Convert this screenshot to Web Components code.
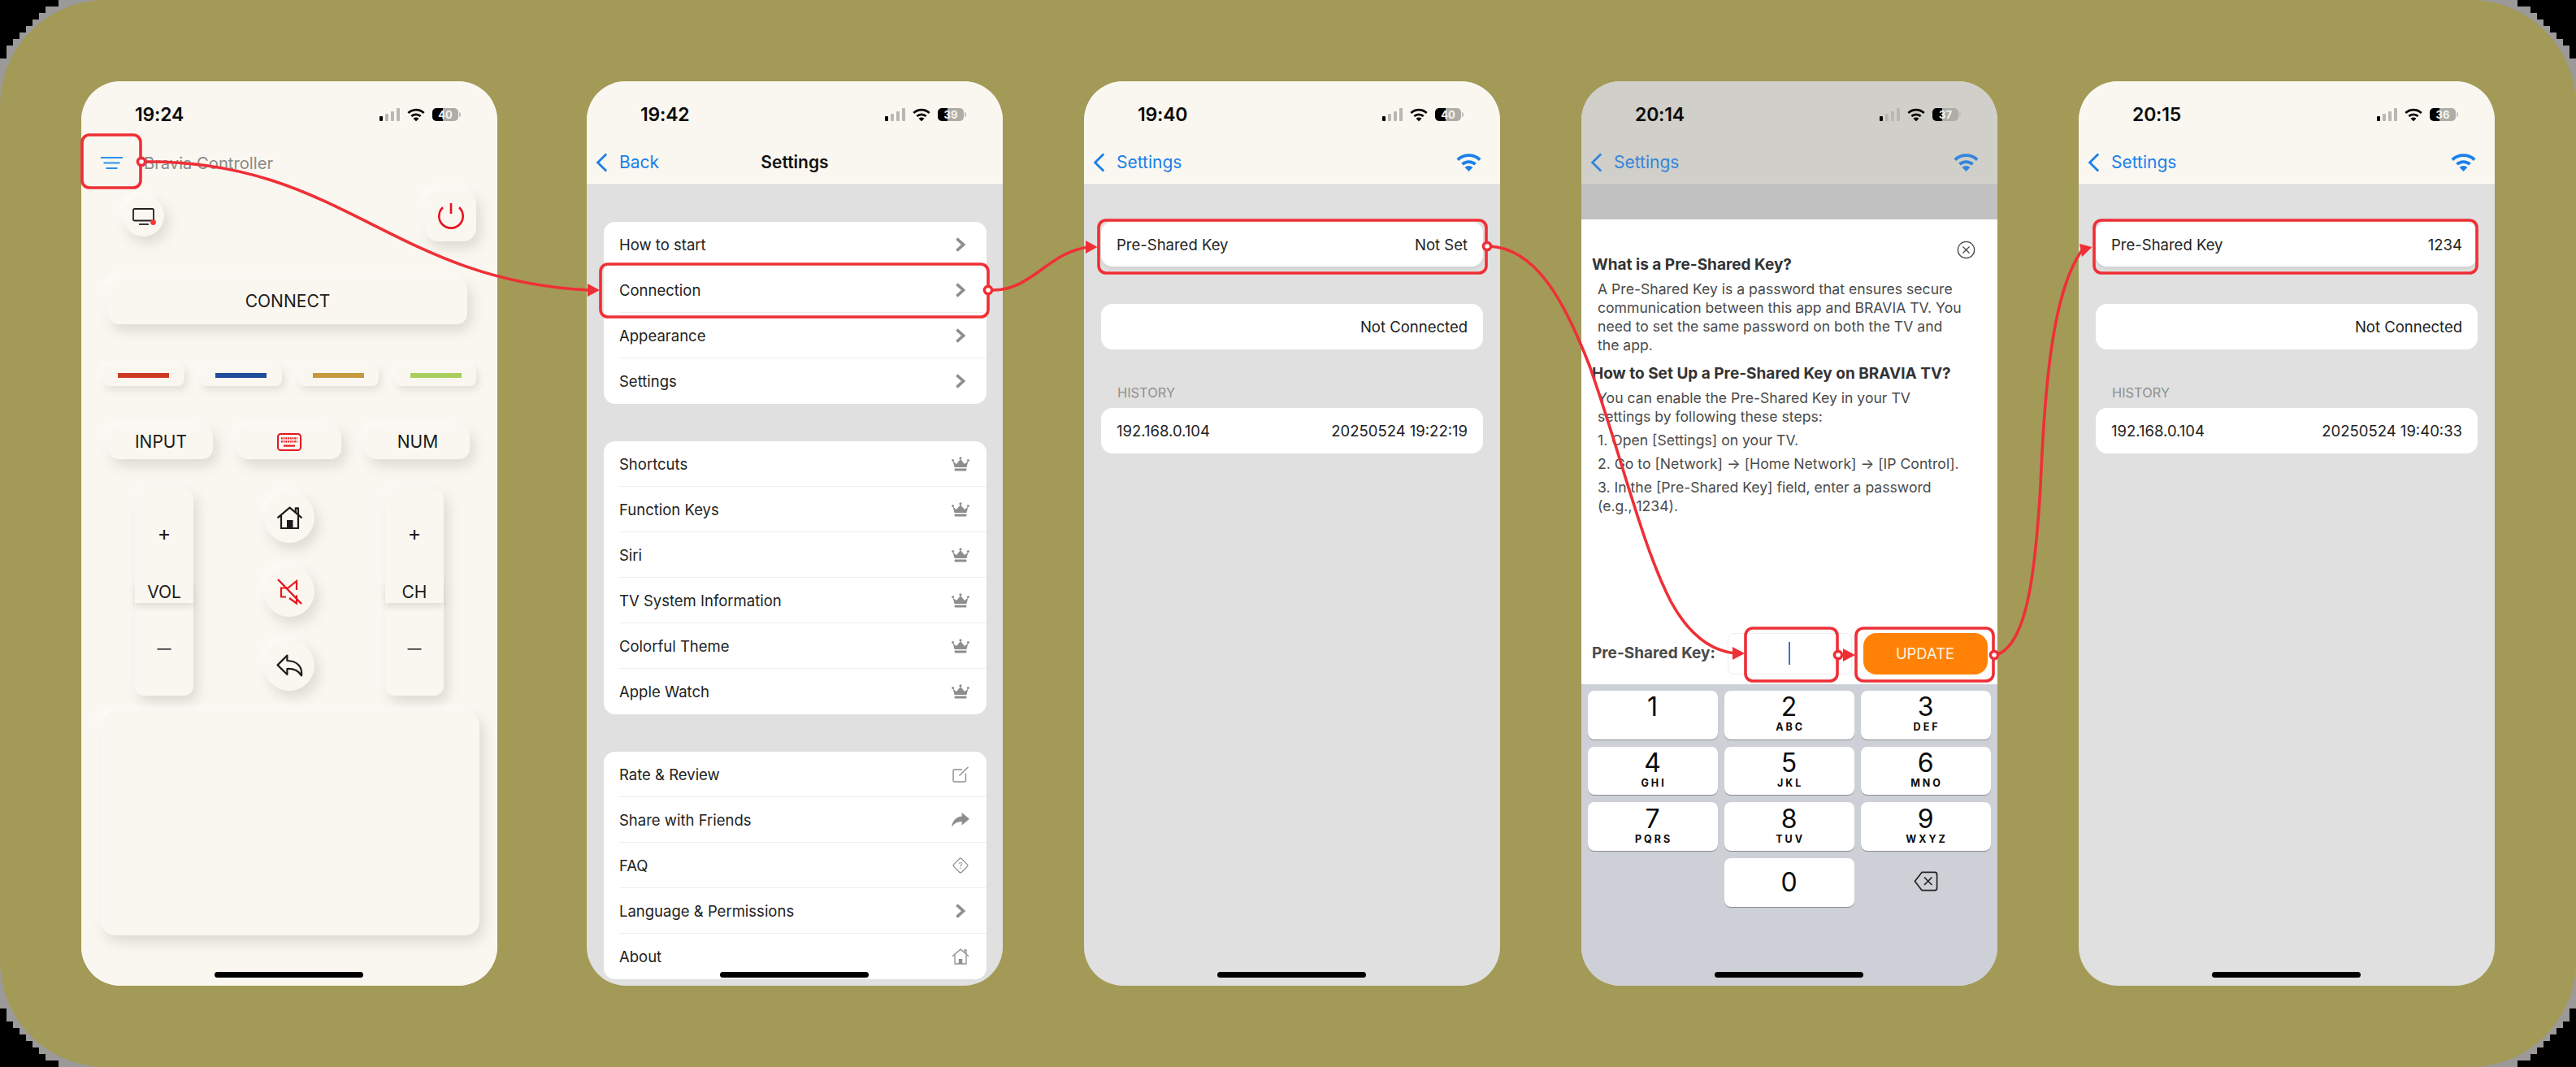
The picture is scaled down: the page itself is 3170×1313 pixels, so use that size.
<!doctype html>
<html lang="en">
<head>
<meta charset="utf-8">
<title>Bravia Controller setup</title>
<style>
  html, body { margin: 0; background: #000; }
  body { width: 3170px; height: 1313px; overflow: hidden; font-family: Inter, "Noto Sans", sans-serif; }
</style>
</head>
<body>
<app-board>
  <phone-frame time="19:24" battery="40">
    <remote-screen></remote-screen>
  </phone-frame>

  <phone-frame time="19:42" battery="39" style="margin-left:10px">
    <nav-bar back="Back" heading="Settings"></nav-bar>
    <setting-list>
      <setting-card>
        <setting-row>How to start<ui-icon slot="end" name="chevron"></ui-icon></setting-row>
        <setting-row>Connection<ui-icon slot="end" name="chevron"></ui-icon></setting-row>
        <setting-row>Appearance<ui-icon slot="end" name="chevron"></ui-icon></setting-row>
        <setting-row>Settings<ui-icon slot="end" name="chevron"></ui-icon></setting-row>
      </setting-card>
      <setting-card>
        <setting-row>Shortcuts<ui-icon slot="end" name="crown"></ui-icon></setting-row>
        <setting-row>Function Keys<ui-icon slot="end" name="crown"></ui-icon></setting-row>
        <setting-row>Siri<ui-icon slot="end" name="crown"></ui-icon></setting-row>
        <setting-row>TV System Information<ui-icon slot="end" name="crown"></ui-icon></setting-row>
        <setting-row>Colorful Theme<ui-icon slot="end" name="crown"></ui-icon></setting-row>
        <setting-row>Apple Watch<ui-icon slot="end" name="crown"></ui-icon></setting-row>
      </setting-card>
      <setting-card>
        <setting-row>Rate &amp; Review<ui-icon slot="end" name="rate"></ui-icon></setting-row>
        <setting-row>Share with Friends<ui-icon slot="end" name="share"></ui-icon></setting-row>
        <setting-row>FAQ<ui-icon slot="end" name="faq"></ui-icon></setting-row>
        <setting-row>Language &amp; Permissions<ui-icon slot="end" name="chevron"></ui-icon></setting-row>
        <setting-row>About<ui-icon slot="end" name="about"></ui-icon></setting-row>
      </setting-card>
    </setting-list>
  </phone-frame>

  <phone-frame time="19:40" battery="40">
    <nav-bar back="Settings" wifi></nav-bar>
    <connection-list psk="Not Set" address="192.168.0.104" stamp="20250524 19:22:19"></connection-list>
  </phone-frame>

  <phone-frame time="20:14" battery="37" style="--bar-bg:#d0cfc9;--accent:#3585dc;--bar-line:#b9b9b5">
    <nav-bar back="Settings" wifi></nav-bar>
    <help-sheet></help-sheet>
    <num-pad></num-pad>
  </phone-frame>

  <phone-frame time="20:15" battery="36">
    <nav-bar back="Settings" wifi></nav-bar>
    <connection-list psk="1234" address="192.168.0.104" stamp="20250524 19:40:33"></connection-list>
  </phone-frame>

  <flow-overlay></flow-overlay>
</app-board>

<script>
const ICONS = {
  chevron: `<svg viewBox="0 0 22 18"><path d="M6.4 1.6 L14.6 9 L6.4 16.4" fill="none" stroke="currentColor" stroke-width="3.6"/></svg>`,
  crown: `<svg viewBox="0 0 22 18" fill="currentColor"><path d="M1.6 5.4 L6 9 L11 3 L16 9 L20.4 5.4 L18.4 13 H3.6 Z"/><circle cx="1.6" cy="4.6" r="1.5"/><circle cx="11" cy="1.8" r="1.6"/><circle cx="20.4" cy="4.6" r="1.5"/><rect x="3.6" y="14.4" width="14.8" height="3" rx="1"/></svg>`,
  rate: `<svg viewBox="0 0 22 20" fill="none" stroke="currentColor" stroke-width="1.4"><path d="M17.5 8.5 V17.6 a1.4 1.4 0 0 1 -1.4 1.4 H3.4 a1.4 1.4 0 0 1 -1.4 -1.4 V5.4 a1.4 1.4 0 0 1 1.4 -1.4 H13"/><path d="M9.5 11.5 L20.5 .8"/></svg>`,
  share: `<svg viewBox="0 0 22 18" fill="currentColor"><path d="M12.6 0 L22 7.8 L12.6 15.6 V11 C7.4 11 3.4 13 .2 17.8 C.8 11 5 5.2 12.6 4.6 Z"/></svg>`,
  faq: `<svg viewBox="0 0 22 22"><rect x="4.2" y="4.2" width="13.6" height="13.6" rx="1.6" transform="rotate(45 11 11)" fill="none" stroke="currentColor" stroke-width="1.2"/><text x="11" y="14.6" text-anchor="middle" font-size="10" font-family="Inter, sans-serif" fill="currentColor">?</text></svg>`,
  about: `<svg viewBox="0 0 22 20" fill="none" stroke="currentColor" stroke-width="1.3"><path d="M1 9.8 L11 1.2 L21 9.8"/><path d="M4 8 V19 H18 V8"/><path d="M16 4.6 V1.8 H18 V6.4"/><rect x="8.8" y="13" width="4.4" height="6" fill="currentColor" stroke="none"/></svg>`,
  menu: `<svg viewBox="0 0 27 15" fill="currentColor"><rect width="27" height="2"/><rect x="3.5" y="6.5" width="20" height="2"/><rect x="6.5" y="13" width="14" height="2"/></svg>`,
  tv: `<svg viewBox="0 0 30 22" fill="none" stroke="currentColor" stroke-width="1.8"><rect x="1" y="1" width="25" height="14.5" rx="1.6"/><path d="M8 20 H20"/><circle cx="25.5" cy="17.5" r="3.4" fill="#f23a36" stroke="none"/></svg>`,
  power: `<svg viewBox="0 0 32 32" fill="none" stroke="currentColor" stroke-width="2.6"><path d="M6 5.2 A14.7 14.7 0 1 0 26 5.2"/><path d="M16 0 V13"/></svg>`,
  keyboard: `<svg viewBox="0 0 30 22" fill="none" stroke="currentColor"><rect x="1" y="1" width="28" height="20" rx="3.6" stroke-width="2"/><path d="M5 6.4 H25 M5 10.4 H25" stroke-width="2.2" stroke-dasharray="1.8 .9"/><path d="M8 15.6 H22" stroke-width="2.2"/></svg>`,
  home: `<svg viewBox="0 0 33 28" fill="none" stroke="currentColor" stroke-width="2.2" stroke-linejoin="round"><path d="M1.5 14.4 L16.5 1.6 L31.5 14.4"/><path d="M6 11 V27 H27 V11"/><path d="M23.8 7 V2.4 H27 V10"/><rect x="13" y="17" width="7.5" height="10" fill="currentColor" stroke="none"/></svg>`,
  mute: `<svg viewBox="0 0 31 32" fill="none" stroke="currentColor" stroke-width="2.2"><path d="M24 14 V3 L13.5 11.5 H5 V22.5 H11"/><path d="M15 24 L24 30.5 V20.5"/><path d="M1 1 L30 31" stroke-width="2.4"/></svg>`,
  back: `<svg viewBox="0 0 33 28" fill="none" stroke="currentColor" stroke-width="2.2" stroke-linejoin="round"><path d="M13.4 1.6 L1.6 13.4 L13.4 25 V18 C21 17.6 27.4 20.4 31 26.4 C32.4 15.4 25.6 8.4 13.4 8 Z"/></svg>`,
  backChevron: `<svg viewBox="0 0 15 24" fill="none" stroke="currentColor" stroke-width="2.8"><path d="M13.2 1.4 L2.6 12 L13.2 22.6"/></svg>`,
  wifi: `<svg viewBox="0 0 24 18" fill="none" stroke="currentColor" stroke-width="2.9"><path d="M1.4 6.6 A15.4 15.4 0 0 1 22.6 6.6"/><path d="M5.8 11 A9 9 0 0 1 18.2 11"/><path d="M12 17.8 L8.2 14 A5.4 5.4 0 0 1 15.8 14 Z" fill="currentColor" stroke="none"/></svg>`,
  backspace: `<svg viewBox="0 0 30 25" fill="none" stroke="currentColor" stroke-width="1.7" stroke-linejoin="round"><path d="M10 1.4 H26 a2.6 2.6 0 0 1 2.6 2.6 V21 a2.6 2.6 0 0 1 -2.6 2.6 H10 L1.4 12.5 Z"/><path d="M13 7.5 L22.4 17 M22.4 7.5 L13 17"/></svg>`,
  close: `<svg viewBox="0 0 24 24" fill="none" stroke="currentColor" stroke-width="1.3"><circle cx="12" cy="12" r="10.6"/><path d="M7.8 7.8 L16.2 16.2 M16.2 7.8 L7.8 16.2"/></svg>`
};

class UiIcon extends HTMLElement {
  constructor() {
    super();
    this.attachShadow({ mode: "open" });
  }

  connectedCallback() {
    const name = this.getAttribute("name");
    this.shadowRoot.innerHTML = `
      <style>
        :host { display: inline-flex; width: 22px; color: #8e8e8e; flex: none; }
        svg { display: block; width: 100%; height: auto; }
      </style>
      ${ICONS[name]}`;
  }
}
customElements.define("ui-icon", UiIcon);

class AppBoard extends HTMLElement {
  constructor() {
    super();
    this.attachShadow({ mode: "open" });
  }

  // stair-stepped black corners, the screenshot has them around the rounded card
  corners() {
    const r = 130, cell = 8;
    let d = "";
    for (let j = 0; j * cell < r; j++) {
      let run = 0;
      while ((run + 1) * cell <= r && Math.hypot(r - (run + 1) * cell, r - (j + 1) * cell) > r + 2) run++;
      if (run) d += `M0 ${j * cell}h${run * cell}v${cell}h-${run * cell}z`;
    }
    return d;
  }

  connectedCallback() {
    const d = this.corners();
    this.shadowRoot.innerHTML = `
      <style>
        :host { display: block; position: relative; width: 3170px; height: 1313px; background: #9c9a98; overflow: hidden; }
        svg { position: absolute; inset: 0; }
        .card {
          position: relative; box-sizing: border-box; width: 100%; height: 100%;
          padding: 100px 100px; display: flex; gap: 100px; align-items: flex-start;
          background: #a39a57; border-radius: 130px;
        }
      </style>
      <svg width="3170" height="1313">
        <path d="${d}"/>
        <path d="${d}" transform="translate(3170 0) scale(-1 1)"/>
        <path d="${d}" transform="translate(0 1313) scale(1 -1)"/>
        <path d="${d}" transform="translate(3170 1313) scale(-1 -1)"/>
      </svg>
      <div class="card"><slot></slot></div>`;
  }
}
customElements.define("app-board", AppBoard);

class StatusBar extends HTMLElement {
  constructor() {
    super();
    this.attachShadow({ mode: "open" });
  }

  connectedCallback() {
    const level = this.getAttribute("battery");
    this.shadowRoot.innerHTML = `
      <style>
        :host { display: flex; align-items: center; box-sizing: border-box; height: 82px; padding: 0 45px 0 66px; background: var(--bar-bg, #f9f7f0); }
        .time { font: 600 23px/28px Inter, sans-serif; color: #0a0a0a; letter-spacing: -.2px; }
        .tray { margin-left: auto; display: flex; align-items: center; }
        .signal { display: flex; align-items: flex-end; gap: 3px; height: 16px; width: 25px; margin-right: 9px; }
        .signal i { width: 4px; border-radius: 1px; background: #b8b7b1; }
        .signal i:first-child { height: 6px; background: #000; }
        .signal i:nth-child(2) { height: 9px; }
        .signal i:nth-child(3) { height: 12px; }
        .signal i:nth-child(4) { height: 16px; }
        ui-icon { width: 22px; color: #000; margin-right: 9px; }
        .battery {
          position: relative; width: 32px; height: 16px; border-radius: 5px; margin-right: 3px;
          display: flex; align-items: center; justify-content: center;
          font: 700 13px/16px Inter, sans-serif; color: #f4f4f0;
          background: linear-gradient(90deg, #000 ${level}%, #aeada7 ${level}%);
        }
        .battery::after { content: ""; position: absolute; right: -3px; top: 5px; width: 2px; height: 6px; border-radius: 0 2px 2px 0; background: #c0bfba; }
      </style>
      <span class="time">${this.getAttribute("time")}</span>
      <div class="tray">
        <div class="signal"><i></i><i></i><i></i><i></i></div>
        <ui-icon name="wifi"></ui-icon>
        <div class="battery">${level}</div>
      </div>`;
  }
}
customElements.define("status-bar", StatusBar);

class PhoneFrame extends HTMLElement {
  constructor() {
    super();
    this.attachShadow({ mode: "open" });
  }

  connectedCallback() {
    this.shadowRoot.innerHTML = `
      <style>
        :host {
          position: relative; display: flex; flex-direction: column; flex: none;
          width: 512px; height: 1113px; overflow: hidden;
          border-radius: 48px; background: #dfe0df;
        }
        .home { position: absolute; left: 164px; bottom: 10px; width: 183px; height: 7px; border-radius: 4px; background: #000; }
      </style>
      <status-bar time="${this.getAttribute("time")}" battery="${this.getAttribute("battery")}"></status-bar>
      <slot></slot>
      <div class="home"></div>`;
  }
}
customElements.define("phone-frame", PhoneFrame);

class NavBar extends HTMLElement {
  constructor() {
    super();
    this.attachShadow({ mode: "open" });
  }

  connectedCallback() {
    const heading = this.getAttribute("heading");
    const wifi = this.hasAttribute("wifi");
    this.shadowRoot.innerHTML = `
      <style>
        :host {
          position: relative; display: flex; align-items: center; flex: none; box-sizing: border-box;
          height: 46px; padding: 0 23px 10px 11px; background: var(--bar-bg, #f9f7f0);
          border-bottom: 1px solid var(--bar-line, #d4d4d0); color: var(--accent, #1b80ea);
          font: 400 21px/26px Inter, sans-serif;
        }
        .chev { width: 15px; color: inherit; margin-right: 14px; }
        .wifi { width: 31px; color: inherit; margin-left: auto; }
        b { position: absolute; left: 0; right: 0; top: 5px; text-align: center; font-weight: 600; color: #111; }
      </style>
      <ui-icon class="chev" name="backChevron"></ui-icon>
      <span>${this.getAttribute("back")}</span>
      ${heading ? `<b>${heading}</b>` : ""}
      ${wifi ? `<ui-icon class="wifi" name="wifi"></ui-icon>` : ""}`;
  }
}
customElements.define("nav-bar", NavBar);

class SettingList extends HTMLElement {
  constructor() {
    super();
    this.attachShadow({ mode: "open" });
  }

  connectedCallback() {
    this.shadowRoot.innerHTML = `
      <style>
        :host { display: flex; flex-direction: column; gap: 46px; padding: 45px 20.5px 0; flex: 1; }
      </style>
      <slot></slot>`;
  }
}
customElements.define("setting-list", SettingList);

class SettingCard extends HTMLElement {
  constructor() {
    super();
    this.attachShadow({ mode: "open" });
  }

  connectedCallback() {
    this.shadowRoot.innerHTML = `
      <style>
        :host { display: block; background: #fff; border-radius: 14px; overflow: hidden; }
      </style>
      <slot></slot>`;
  }
}
customElements.define("setting-card", SettingCard);

class SettingRow extends HTMLElement {
  constructor() {
    super();
    this.attachShadow({ mode: "open" });
  }

  connectedCallback() {
    this.shadowRoot.innerHTML = `
      <style>
        :host { display: block; padding-left: var(--row-start, 19.5px); font: 400 18.5px/24px Inter, sans-serif; color: #222; }
        .line {
          display: flex; align-items: center; justify-content: space-between; box-sizing: border-box;
          height: var(--row-height, 56px); padding-right: var(--row-end, 21px); border-bottom: 1px solid #eeeeee;
        }
        :host(:last-child) .line { border-bottom: 0; }
      </style>
      <div class="line"><span><slot></slot></span><slot name="end"></slot></div>`;
  }
}
customElements.define("setting-row", SettingRow);

class ConnectionList extends HTMLElement {
  constructor() {
    super();
    this.attachShadow({ mode: "open" });
  }

  connectedCallback() {
    this.shadowRoot.innerHTML = `
      <style>
        :host { display: block; padding: 45px 21px 0; --row-end: 19px; --row-start: 19px; }
        .key { margin-bottom: 46px; --row-height: 55px; box-shadow: 0 4px 3px rgba(0,0,0,.05); }
        h2 { margin: 43px 0 8.5px 20px; font: 400 16.4px/20px Inter, sans-serif; color: #8f8f8f; }
      </style>
      <setting-card class="key"><setting-row>Pre-Shared Key<span slot="end">${this.getAttribute("psk")}</span></setting-row></setting-card>
      <setting-card><setting-row><span></span><span slot="end">Not Connected</span></setting-row></setting-card>
      <h2>HISTORY</h2>
      <setting-card><setting-row>${this.getAttribute("address")}<span slot="end">${this.getAttribute("stamp")}</span></setting-row></setting-card>`;
  }
}
customElements.define("connection-list", ConnectionList);

class SoftKey extends HTMLElement {
  constructor() {
    super();
    this.attachShadow({ mode: "open" });
  }

  connectedCallback() {
    this.shadowRoot.innerHTML = `
      <style>
        :host {
          display: flex; align-items: center; justify-content: center; box-sizing: border-box; flex: none;
          background: #f9f7f0; border-radius: 13px; color: #1c1c1c;
          font: 400 21px/26px Inter, sans-serif;
          box-shadow: 5px 8px 16px rgba(110,105,90,.2), -4px -4px 10px rgba(255,255,255,.75);
        }
        :host([round]) { border-radius: 50%; }
      </style>
      <slot></slot>`;
  }
}
customElements.define("soft-key", SoftKey);

class RockerKey extends HTMLElement {
  constructor() {
    super();
    this.attachShadow({ mode: "open" });
  }

  connectedCallback() {
    this.shadowRoot.innerHTML = `
      <style>
        :host {
          display: flex; flex-direction: column; flex: none; width: 72px; height: 254px;
          background: #f9f7f0; border-radius: 12px; color: #1c1c1c;
          font: 400 21px/26px Inter, sans-serif; text-align: center;
          box-shadow: 5px 8px 16px rgba(110,105,90,.2), -4px -2px 10px rgba(255,255,255,.6);
        }
        .step { height: 112px; display: flex; align-items: center; justify-content: center; font-size: 25px; padding-bottom: 4px; box-sizing: border-box; }
        .step.down { height: 113.5px; font-size: 17px; padding-bottom: 1px; }
        .label { height: 28.5px; line-height: 30px; background: #f9f7f0; box-shadow: 0 5px 7px rgba(110,105,90,.16); position: relative; }
      </style>
      <div class="step">+</div>
      <div class="label">${this.getAttribute("label")}</div>
      <div class="step down">—</div>`;
  }
}
customElements.define("rocker-key", RockerKey);

class RemoteScreen extends HTMLElement {
  constructor() {
    super();
    this.attachShadow({ mode: "open" });
  }

  connectedCallback() {
    const colors = ["#cc3b24", "#1f4d9e", "#c6993e", "#a8cf5b"];
    this.shadowRoot.innerHTML = `
      <style>
        :host { display: flex; flex-direction: column; flex: 1; background: #f9f7f0; }
        .top { display: flex; align-items: center; height: 45px; padding: 0 0 8px 24px; box-sizing: border-box; font: 400 20.2px/26px Inter, sans-serif; color: #8a8a88; }
        .top ui-icon { width: 27px; color: #2b8ff0; margin-right: 26px; }
        .power-row { display: flex; align-items: center; justify-content: space-between; margin: 7px 26px 0 51px; }
        .connect { margin: 46px 37px 0 33px; height: 56px; }
        .colors { display: flex; gap: 20px; margin: 50px 26px 0 27px; }
        .colors soft-key { flex: 1; height: 25.5px; border-radius: 8px; box-shadow: 3px 5px 10px rgba(110,105,90,.16), -3px -2px 6px rgba(255,255,255,.7); }
        .colors i { display: block; width: 63px; height: 6px; }
        .inputs { display: flex; gap: 30px; margin: 49px 34px 0; }
        .inputs soft-key { flex: 1; height: 41px; }
        .controls { display: flex; justify-content: space-between; margin: 37px 66px 0; height: 254px; }
        .middle { display: flex; flex-direction: column; align-items: center; gap: 29px; padding-top: 4px; }
        .middle ui-icon { color: #1c1c1c; width: 33px; }
        .pad { margin: 19px 22px 0 24px; height: 276px; border-radius: 18px; }
      </style>
      <div class="top"><ui-icon name="menu"></ui-icon>Bravia Controller</div>
      <div class="power-row">
        <soft-key round style="width:51px;height:51px"><ui-icon name="tv" style="width:30px;color:#222;margin:2px 0 0 2px"></ui-icon></soft-key>
        <soft-key style="width:63px;height:63px;border-radius:16px"><ui-icon name="power" style="width:32px;color:#e8141c"></ui-icon></soft-key>
      </div>
      <soft-key class="connect">CONNECT</soft-key>
      <div class="colors">${colors.map(c => `<soft-key><i style="background:${c}"></i></soft-key>`).join("")}</div>
      <div class="inputs">
        <soft-key>INPUT</soft-key>
        <soft-key><ui-icon name="keyboard" style="width:30px;color:#e8141c"></ui-icon></soft-key>
        <soft-key>NUM</soft-key>
      </div>
      <div class="controls">
        <rocker-key label="VOL"></rocker-key>
        <div class="middle">
          <soft-key round style="width:62px;height:62px"><ui-icon name="home"></ui-icon></soft-key>
          <soft-key round style="width:62px;height:62px"><ui-icon name="mute" style="color:#e8141c;width:31px"></ui-icon></soft-key>
          <soft-key round style="width:62px;height:62px"><ui-icon name="back"></ui-icon></soft-key>
        </div>
        <rocker-key label="CH"></rocker-key>
      </div>
      <soft-key class="pad"></soft-key>`;
  }
}
customElements.define("remote-screen", RemoteScreen);

class HelpSheet extends HTMLElement {
  constructor() {
    super();
    this.attachShadow({ mode: "open" });
  }

  connectedCallback() {
    this.shadowRoot.innerHTML = `
      <style>
        :host { display: block; flex: none; background: #c1c1c1; padding-top: 41.5px; }
        .sheet {
          position: relative; box-sizing: border-box; height: 572.5px; padding: 44px 12.5px 12.5px 13px;
          display: flex; flex-direction: column; background: #fff;
          font: 400 17.6px/23px Inter, sans-serif; color: #4a4a4a;
        }
        h3 { margin: 0; font: 700 19px/23px Inter, sans-serif; color: #333; }
        h3 + p { margin-top: 7px; }
        p { margin: 6px 0 0 7px; }
        p + h3 { margin-top: 12px; }
        .close { position: absolute; top: 26px; right: 27px; width: 23px; color: #444; }
        .entry { margin-top: auto; display: flex; align-items: center; }
        label { flex: 1; font: 700 19px/24px Inter, sans-serif; color: #4a4a4a; }
        .field { width: 153px; height: 51px; border: 1px solid #eeeeee; border-radius: 8px; box-sizing: border-box; display: flex; align-items: center; justify-content: center; }
        .field i { display: block; width: 2px; height: 28px; background: #3e70cf; }
        button {
          all: unset; box-sizing: border-box; margin-left: 14px; width: 153px; height: 51px; border-radius: 16px;
          background: #ff8206; color: #f9f3e0; text-align: center; font: 400 18.4px/51px Inter, sans-serif;
        }
      </style>
      <div class="sheet">
        <ui-icon class="close" name="close"></ui-icon>
        <h3>What is a Pre-Shared Key?</h3>
        <p>A Pre-Shared Key is a password that ensures secure<br>communication between this app and BRAVIA TV. You<br>need to set the same password on both the TV and<br>the app.</p>
        <h3>How to Set Up a Pre-Shared Key on BRAVIA TV?</h3>
        <p>You can enable the Pre-Shared Key in your TV<br>settings by following these steps:</p>
        <p>1. Open [Settings] on your TV.</p>
        <p>2. Go to [Network] → [Home Network] → [IP Control].</p>
        <p>3. In the [Pre-Shared Key] field, enter a password<br>(e.g., 1234).</p>
        <div class="entry">
          <label>Pre-Shared Key:</label>
          <div class="field"><i></i></div>
          <button>UPDATE</button>
        </div>
      </div>`;
  }
}
customElements.define("help-sheet", HelpSheet);

class NumKey extends HTMLElement {
  constructor() {
    super();
    this.attachShadow({ mode: "open" });
  }

  connectedCallback() {
    const letters = this.getAttribute("letters");
    this.shadowRoot.innerHTML = `
      <style>
        :host {
          display: flex; flex-direction: column; align-items: center; justify-content: center;
          padding-bottom: 3px; box-sizing: border-box; height: 59.5px; color: #0a0a0a;
          background: #fff; border-radius: 8px; box-shadow: 0 1px 0 #8c8c90;
        }
        :host([solo]) { padding-bottom: 0; }
        b { font: 400 32px/34px Inter, sans-serif; }
        small { font: 700 12.5px/16px Inter, sans-serif; letter-spacing: 3px; margin-right: -3px; min-height: 16px; }
        :host([solo]) small { display: none; }
      </style>
      <b>${this.getAttribute("digit")}</b><small>${letters || ""}</small>`;
  }
}
customElements.define("num-key", NumKey);

class NumPad extends HTMLElement {
  constructor() {
    super();
    this.attachShadow({ mode: "open" });
  }

  connectedCallback() {
    const keys = [["1", ""], ["2", "ABC"], ["3", "DEF"], ["4", "GHI"], ["5", "JKL"], ["6", "MNO"], ["7", "PQRS"], ["8", "TUV"], ["9", "WXYZ"]];
    this.shadowRoot.innerHTML = `
      <style>
        :host {
          flex: 1; display: grid; grid-template-columns: repeat(3, 160px); grid-auto-rows: 59.5px;
          gap: 9.2px 8px; padding: 8px 0 0 7.6px; background: #cdd0d6; align-content: start;
        }
        .erase { display: flex; align-items: center; justify-content: center; padding-bottom: 3px; }
        ui-icon { width: 30px; color: #222; }
      </style>
      ${keys.map(([d, l]) => `<num-key digit="${d}" letters="${l}"></num-key>`).join("")}
      <span></span>
      <num-key digit="0" solo></num-key>
      <div class="erase"><ui-icon name="backspace"></ui-icon></div>`;
  }
}
customElements.define("num-pad", NumPad);

class FlowOverlay extends HTMLElement {
  constructor() {
    super();
    this.attachShadow({ mode: "open" });
  }

  connectedCallback() {
    const boxes = [[101, 166, 72, 65], [739, 325, 477, 65], [1352, 271, 477, 65], [2148, 773, 113, 65], [2284, 773, 169, 65], [2577, 271, 471, 65]];
    const lines = [
      "M173 199 C420 195 480 345 725 357",
      "M1222 357 C1270 357 1290 310 1340 304",
      "M1832 303 C1890 305 1925 370 1956 450 C1995 560 2020 670 2056 740 C2075 775 2100 800 2135 804",
      "M2456 806 C2495 795 2505 700 2511 598 C2516 480 2525 360 2562 308"
    ];
    const heads = [
      "723,349 738,357 723,365", "1336,296 1350.5,304 1336,312",
      "2132,796 2147,804 2132,812", "2268,798 2283,806 2268,814",
      "2559,300 2574.5,304 2562,316"
    ];
    const dots = [[174, 199], [1216, 357], [1830, 303], [2262, 806], [2454, 806]];
    this.shadowRoot.innerHTML = `
      <style>
        :host { position: absolute; inset: 0; pointer-events: none; }
        svg { display: block; }
      </style>
      <svg width="3170" height="1313" fill="none" stroke="#ef2f36" stroke-width="3.6">
        ${lines.map(d => `<path d="${d}"/>`).join("")}
        ${boxes.map(([x, y, w, h]) => `<rect x="${x}" y="${y}" width="${w}" height="${h}" rx="9"/>`).join("")}
        ${heads.map(p => `<polygon points="${p}" fill="#ef2f36" stroke="none"/>`).join("")}
        ${dots.map(([x, y]) => `<circle cx="${x}" cy="${y}" r="4.6" fill="#fff"/>`).join("")}
      </svg>`;
  }
}
customElements.define("flow-overlay", FlowOverlay);
</script>
</body>
</html>
